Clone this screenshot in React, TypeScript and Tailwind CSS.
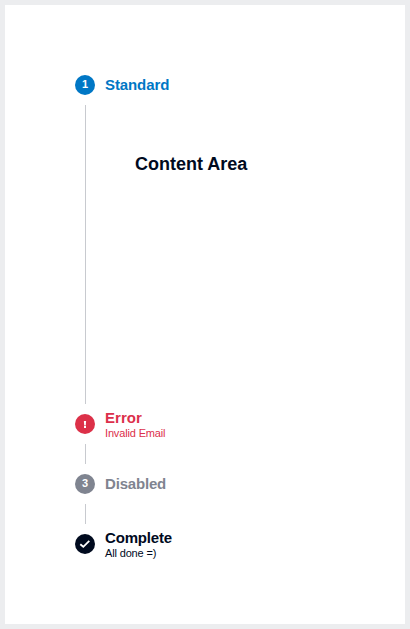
import type { ReactNode } from "react";

function Badge({ color, children }: { color: string; children: ReactNode }) {
  return (
    <div className={`flex h-5 w-5 shrink-0 items-center justify-center rounded-full text-[11px] leading-none font-bold text-white ${color}`}>
      {children}
    </div>
  );
}

type StepProps = { label: string; detail?: string; text: string; color: string; icon: ReactNode; tracking?: string };

function Step({ label, detail, text, color, icon, tracking = "tracking-[-0.1px]" }: StepProps) {
  return (
    <div className={`flex h-10 items-center gap-2.5 ${text}`}>
      <Badge color={color}>{icon}</Badge>
      <div className={`flex flex-col ${detail ? "pt-px" : "pb-0.5"}`}>
        <span className={`text-[15px] leading-[17px] font-bold ${tracking}`}>{label}</span>
        {detail && <span className="mt-px text-[11px] leading-[13px] tracking-[-0.15px]">{detail}</span>}
      </div>
    </div>
  );
}

function Connector({ height }: { height: string }) {
  return <div className={`ml-2.5 w-px bg-[#c8cacf] ${height}`} />;
}

export default function App() {
  return (
    <div className="h-[629px] w-[410px] bg-[#ecedef] p-[5px] font-['Liberation_Sans',sans-serif]">
      <div className="h-full bg-white px-[70px] pt-[60px]">
        <Step label="Standard" text="text-[#0077c5]" color="bg-[#0077c5]" icon={<span className="pb-0.5">1</span>} />
        <div className="flex h-[299px]">
          <Connector height="h-full" />
          <h2 className="mt-[48px] ml-[49px] text-[18px] leading-[22px] font-bold text-[#000a1e]">Content Area</h2>
        </div>
        <Step
          label="Error"
          detail="Invalid Email"
          text="text-[#dc2f4b]"
          color="bg-[#dc3048]"
          tracking="tracking-[0.05px]"
          icon={
            <svg width="20" height="20" viewBox="0 0 20 20" fill="white">
              <path d="M8.9 7h2.2l-.3 4.6H9.2z" />
              <path d="M9 12.1h2V14H9z" />
            </svg>
          }
        />
        <Connector height="h-5" />
        <Step label="Disabled" text="text-[#7f8490]" color="bg-[#7f8490]" tracking="tracking-[-0.18px]" icon={<span className="pb-0.5">3</span>} />
        <Connector height="h-5" />
        <Step
          label="Complete"
          detail="All done =)"
          text="text-[#000a1e]"
          color="bg-[#000a1e]"
          tracking="tracking-[-0.18px]"
          icon={
            <svg width="20" height="20" viewBox="0 0 20 20" fill="none" stroke="white" strokeWidth="1.8">
              <path d="M5.3 10.2l3 2.6 6-6" />
            </svg>
          }
        />
      </div>
    </div>
  );
}
